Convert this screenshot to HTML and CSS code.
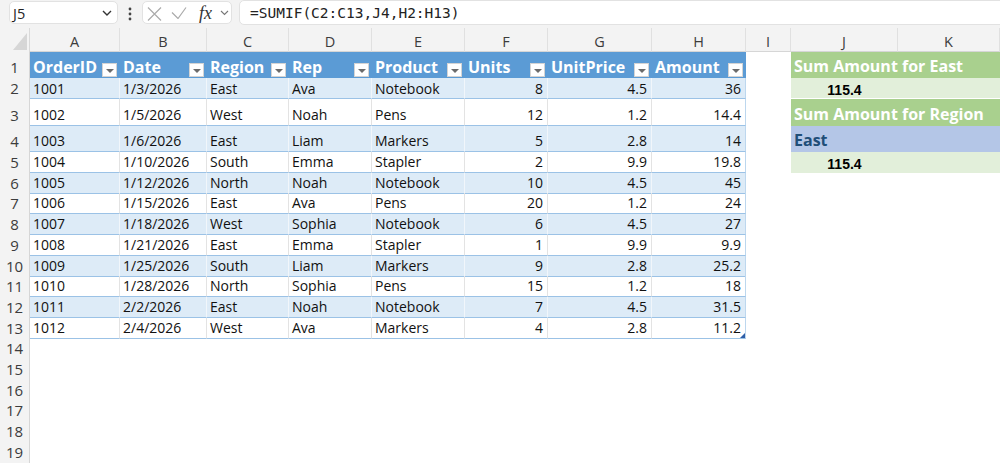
FILE: index.html
```html
<!DOCTYPE html>
<html>
<head>
<meta charset="utf-8">
<link rel="stylesheet" href="styles.css">
</head>
<body>
<div class="topbar">
  <div class="namebox"><span class="nb-text">J5</span><svg class="nb-chev" width="10" height="6" viewBox="0 0 10 6"><path d="M1 1l4 4 4-4" fill="none" stroke="#333" stroke-width="1.4"/></svg></div>
  <svg class="kebab" width="4" height="14" viewBox="0 0 4 14"><circle cx="2" cy="2" r="1.4" fill="#444"/><circle cx="2" cy="7" r="1.4" fill="#444"/><circle cx="2" cy="12" r="1.4" fill="#444"/></svg>
  <div class="fnbox">
    <svg class="ic-x" width="15" height="14" viewBox="0 0 15 14"><path d="M1 0.5L14 13.5M14 0.5L1 13.5" stroke="#ababab" stroke-width="1.2" fill="none"/></svg>
    <svg class="ic-ok" width="16" height="12" viewBox="0 0 16 12"><path d="M1 5.5l6 6L15 0.5" stroke="#ababab" stroke-width="1.2" fill="none"/></svg>
    <span class="fx">fx</span>
    <svg class="ic-chev" width="9" height="6" viewBox="0 0 9 6"><path d="M1 1l3.5 3.5L8 1" fill="none" stroke="#777" stroke-width="1.1"/></svg>
  </div>
  <div class="formula">=SUMIF(C2:C13,J4,H2:H13)</div>
</div>

<div class="sheet">
  <div class="row colhdr">
    <div class="corner"><svg width="14" height="17" viewBox="0 0 14 17"><polygon points="14,0 14,17 0,17" fill="#d6d6d6"/></svg></div>
    <div class="ch">A</div><div class="ch">B</div><div class="ch">C</div><div class="ch">D</div><div class="ch">E</div><div class="ch">F</div><div class="ch">G</div><div class="ch">H</div><div class="ch">I</div><div class="ch">J</div><div class="ch">K</div>
  </div>

  <div class="row h1">
    <div class="rn">1</div>
    <div class="c th"><span>OrderID</span><i class="dd"></i></div>
    <div class="c th"><span>Date</span><i class="dd"></i></div>
    <div class="c th"><span>Region</span><i class="dd"></i></div>
    <div class="c th"><span>Rep</span><i class="dd"></i></div>
    <div class="c th"><span>Product</span><i class="dd"></i></div>
    <div class="c th"><span>Units</span><i class="dd"></i></div>
    <div class="c th"><span>UnitPrice</span><i class="dd"></i></div>
    <div class="c th"><span>Amount</span><i class="dd"></i></div>
    <div class="c"></div>
    <div class="c jk green">Sum Amount for East</div>
  </div>

  <div class="row h2 band">
    <div class="rn">2</div>
    <div class="c t">1001</div><div class="c t">1/3/2026</div><div class="c t">East</div><div class="c t">Ava</div><div class="c t">Notebook</div><div class="c t num">8</div><div class="c t num">4.5</div><div class="c t num last">36</div>
    <div class="c"></div>
    <div class="c jk lgreen sep"><span class="total">115.4</span></div>
  </div>

  <div class="row h3">
    <div class="rn">3</div>
    <div class="c t">1002</div><div class="c t">1/5/2026</div><div class="c t">West</div><div class="c t">Noah</div><div class="c t">Pens</div><div class="c t num">12</div><div class="c t num">1.2</div><div class="c t num last">14.4</div>
    <div class="c"></div>
    <div class="c jk green big">Sum Amount for Region</div>
  </div>

  <div class="row h4 band">
    <div class="rn">4</div>
    <div class="c t">1003</div><div class="c t">1/6/2026</div><div class="c t">East</div><div class="c t">Liam</div><div class="c t">Markers</div><div class="c t num">5</div><div class="c t num">2.8</div><div class="c t num last">14</div>
    <div class="c"></div>
    <div class="c jk blue">East</div>
  </div>

  <div class="row hn">
    <div class="rn">5</div>
    <div class="c t">1004</div><div class="c t">1/10/2026</div><div class="c t">South</div><div class="c t">Emma</div><div class="c t">Stapler</div><div class="c t num">2</div><div class="c t num">9.9</div><div class="c t num last">19.8</div>
    <div class="c"></div>
    <div class="c jk lgreen"><span class="total">115.4</span></div>
  </div>

  <div class="row hn band">
    <div class="rn">6</div>
    <div class="c t">1005</div><div class="c t">1/12/2026</div><div class="c t">North</div><div class="c t">Noah</div><div class="c t">Notebook</div><div class="c t num">10</div><div class="c t num">4.5</div><div class="c t num last">45</div>
    <div class="c"></div><div class="c jk"></div>
  </div>

  <div class="row hn">
    <div class="rn">7</div>
    <div class="c t">1006</div><div class="c t">1/15/2026</div><div class="c t">East</div><div class="c t">Ava</div><div class="c t">Pens</div><div class="c t num">20</div><div class="c t num">1.2</div><div class="c t num last">24</div>
    <div class="c"></div><div class="c jk"></div>
  </div>

  <div class="row hn band">
    <div class="rn">8</div>
    <div class="c t">1007</div><div class="c t">1/18/2026</div><div class="c t">West</div><div class="c t">Sophia</div><div class="c t">Notebook</div><div class="c t num">6</div><div class="c t num">4.5</div><div class="c t num last">27</div>
    <div class="c"></div><div class="c jk"></div>
  </div>

  <div class="row hn">
    <div class="rn">9</div>
    <div class="c t">1008</div><div class="c t">1/21/2026</div><div class="c t">East</div><div class="c t">Emma</div><div class="c t">Stapler</div><div class="c t num">1</div><div class="c t num">9.9</div><div class="c t num last">9.9</div>
    <div class="c"></div><div class="c jk"></div>
  </div>

  <div class="row hn band">
    <div class="rn">10</div>
    <div class="c t">1009</div><div class="c t">1/25/2026</div><div class="c t">South</div><div class="c t">Liam</div><div class="c t">Markers</div><div class="c t num">9</div><div class="c t num">2.8</div><div class="c t num last">25.2</div>
    <div class="c"></div><div class="c jk"></div>
  </div>

  <div class="row hn">
    <div class="rn">11</div>
    <div class="c t">1010</div><div class="c t">1/28/2026</div><div class="c t">North</div><div class="c t">Sophia</div><div class="c t">Pens</div><div class="c t num">15</div><div class="c t num">1.2</div><div class="c t num last">18</div>
    <div class="c"></div><div class="c jk"></div>
  </div>

  <div class="row hn band">
    <div class="rn">12</div>
    <div class="c t">1011</div><div class="c t">2/2/2026</div><div class="c t">East</div><div class="c t">Noah</div><div class="c t">Notebook</div><div class="c t num">7</div><div class="c t num">4.5</div><div class="c t num last">31.5</div>
    <div class="c"></div><div class="c jk"></div>
  </div>

  <div class="row hn">
    <div class="rn">13</div>
    <div class="c t">1012</div><div class="c t">2/4/2026</div><div class="c t">West</div><div class="c t">Ava</div><div class="c t">Markers</div><div class="c t num">4</div><div class="c t num">2.8</div><div class="c t num last end">11.2<i class="handle"></i></div>
    <div class="c"></div><div class="c jk"></div>
  </div>

  <div class="row hn"><div class="rn">14</div><div class="fill"></div></div>
  <div class="row hn"><div class="rn">15</div><div class="fill"></div></div>
  <div class="row hn"><div class="rn">16</div><div class="fill"></div></div>
  <div class="row hn"><div class="rn">17</div><div class="fill"></div></div>
  <div class="row hn"><div class="rn">18</div><div class="fill"></div></div>
  <div class="row hn"><div class="rn">19</div><div class="fill"></div></div>
</div>
</body>
</html>
```

FILE: styles.css
```css
* { box-sizing: border-box; margin: 0; padding: 0; }
html, body { width: 1000px; height: 464px; overflow: hidden; }
body { background: #fff; font-family: "Open Sans", "Noto Sans", sans-serif; color: #111; }

/* formula bar */
.topbar {
  height: 28px;
  background: #f3f3f3;
  display: flex;
  align-items: flex-start;
  padding-top: 1px;
}
.namebox {
  margin-left: 9px;
  width: 109px;
  height: 23px;
  background: #fff;
  border: 1px solid #e2e2e2;
  border-radius: 5px;
  display: flex;
  align-items: center;
  justify-content: space-between;
  padding: 0 5px 0 3px;
}
.nb-text { font-size: 14.5px; color: #222; margin-top: 1px; }
.nb-chev { margin-top: 1px; }
.kebab { margin: 6px 10px 0 10px; }
.fnbox {
  width: 90px;
  height: 23px;
  background: #fff;
  border: 1px solid #e2e2e2;
  border-radius: 5px;
  display: flex;
  align-items: center;
}
.ic-x { margin-left: 4px; margin-top: 2px; }
.ic-ok { margin-left: 9px; margin-top: 1px; }
.fx {
  margin-left: 12px;
  font-family: "Liberation Serif", "DejaVu Serif", serif;
  font-style: italic;
  font-size: 18px;
  line-height: 20px;
  color: #333;
  margin-top: 1px;
}
.ic-chev { margin-left: 8px; margin-top: 1px; }
.formula {
  flex: 1;
  margin-left: 7px;
  margin-right: -10px;
  margin-top: -1px;
  height: 25px;
  background: #fff;
  border: 1px solid #e2e2e2;
  border-radius: 5px;
  padding-left: 10px;
  font-family: "DejaVu Sans Mono", "Liberation Mono", monospace;
  font-size: 14.5px;
  line-height: 24px;
  color: #222;
}

/* sheet grid */
.row {
  display: grid;
  grid-template-columns: 30px 90px 87px 82px 83px 93px 83px 104px 94px 45px 107px 102px;
}
.colhdr { height: 24px; }
.h1 { height: 26px; }
.h2 { height: 21px; }
.h3 { height: 27px; }
.h4 { height: 26px; }
.hn { height: 20.73px; }

.corner {
  background: #f3f3f3;
  border-right: 1px solid #d9d9d9;
  display: flex;
  justify-content: flex-end;
  align-items: flex-end;
  padding: 0 2px 2px 0;
}
.ch {
  background: #f3f3f3;
  border-right: 1px solid #e0e0e0;
  border-bottom: 1px solid #d6d6d6;
  display: flex;
  justify-content: center;
  align-items: flex-end;
  font-size: 14.5px;
  line-height: 19px;
  color: #3c3c3c;
}
.rn {
  background: #f3f3f3;
  border-right: 1px solid #d6d6d6;
  display: flex;
  justify-content: center;
  align-items: flex-end;
  padding-bottom: 1px;
  font-size: 15px;
  line-height: 19px;
  color: #3c3c3c;
}
.fill { grid-column: span 11; }

.c {
  display: flex;
  align-items: flex-end;
  padding: 0 3px 1px;
  font-size: 14px;
  line-height: 19px;
  white-space: nowrap;
  min-width: 0;
}
.h2 .c { padding-bottom: 0; }
.num { justify-content: flex-end; padding-right: 4px; }
.t {
  border-bottom: 1px solid #9bc2e6;
  border-right: 1px solid #e3e3e3;
}
.band .t { background: #ddebf7; border-right-color: #f1f6fb; }
.t.last { border-right-color: #bdd7ee; }
.band .t.last { border-right-color: #bdd7ee; }
.end { position: relative; }
.handle {
  position: absolute;
  right: 0;
  bottom: 0;
  width: 0;
  height: 0;
  border-left: 5px solid transparent;
  border-bottom: 5px solid #2f5fa8;
}

/* table header */
.th {
  background: #5b9bd5;
  color: #fff;
  font-weight: 700;
  font-size: 16px;
  line-height: 22px;
  padding: 0 3px 0 3px;
  justify-content: space-between;
}
.dd {
  flex: none;
  width: 15px;
  height: 14px;
  margin-bottom: 1px;
  background: #fff;
  border: 1px solid #d4d4d4;
  display: flex;
  align-items: center;
  justify-content: center;
}
.dd::after {
  content: "";
  width: 0;
  height: 0;
  border-left: 4px solid transparent;
  border-right: 4px solid transparent;
  border-top: 4px solid #6b6b6b;
  margin-top: 1px;
}

/* summary block */
.jk { grid-column: span 2; }
.green {
  background: #a9d08e;
  color: #fff;
  font-weight: 700;
  font-size: 16px;
  line-height: 22px;
  padding-left: 3px;
}
.green.big { padding-bottom: 1px; }
.lgreen { background: #e2efda; padding: 0 0 1px 0; }
.sep { border-bottom: 1px solid #fff; }
.total {
  width: 107px;
  text-align: center;
  font-family: "Liberation Sans", Arial, sans-serif;
  font-weight: 700;
  font-size: 14px;
  line-height: 16px;
  color: #000;
}
.blue {
  background: #b4c6e7;
  color: #1f4e78;
  font-weight: 700;
  font-size: 16px;
  line-height: 22px;
  padding-left: 3px;
  padding-bottom: 1px;
}
```
